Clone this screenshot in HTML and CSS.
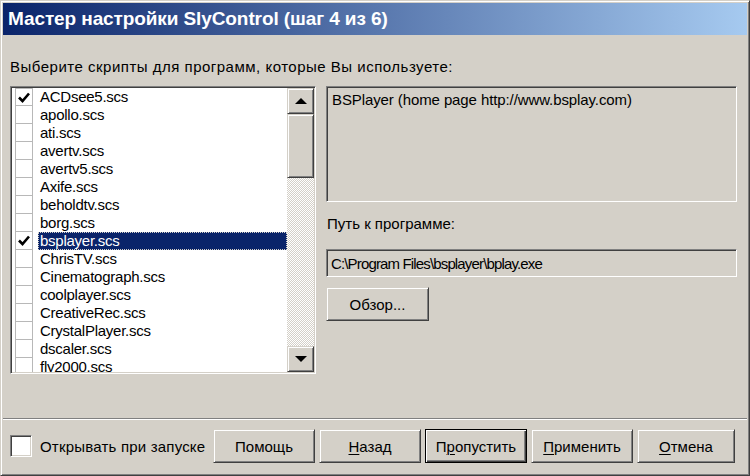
FILE: index.html
```html
<!DOCTYPE html>
<html lang="ru">
<head>
<meta charset="utf-8">
<title>Мастер настройки SlyControl</title>
<link rel="stylesheet" href="styles.css">
</head>
<body>
<div class="window">
  <div class="titlebar">Мастер настройки SlyControl (шаг 4 из 6)</div>
  <div class="content">
    <div class="prompt">Выберите скрипты для программ, которые Вы используете:</div>
    <div class="main">
      <div class="listbox">
        <ul class="items">
          <li class="item"><span class="cb"><svg viewBox="0 0 12 11" class="tick"><path d="M1 5.5 L4.5 9 L11 1.5"/></svg></span><span class="name">ACDsee5.scs</span></li>
          <li class="item"><span class="cb"></span><span class="name">apollo.scs</span></li>
          <li class="item"><span class="cb"></span><span class="name">ati.scs</span></li>
          <li class="item"><span class="cb"></span><span class="name">avertv.scs</span></li>
          <li class="item"><span class="cb"></span><span class="name">avertv5.scs</span></li>
          <li class="item"><span class="cb"></span><span class="name">Axife.scs</span></li>
          <li class="item"><span class="cb"></span><span class="name">beholdtv.scs</span></li>
          <li class="item"><span class="cb"></span><span class="name">borg.scs</span></li>
          <li class="item"><span class="cb"><svg viewBox="0 0 12 11" class="tick"><path d="M1 5.5 L4.5 9 L11 1.5"/></svg></span><span class="name selected">bsplayer.scs</span></li>
          <li class="item"><span class="cb"></span><span class="name">ChrisTV.scs</span></li>
          <li class="item"><span class="cb"></span><span class="name">Cinematograph.scs</span></li>
          <li class="item"><span class="cb"></span><span class="name">coolplayer.scs</span></li>
          <li class="item"><span class="cb"></span><span class="name">CreativeRec.scs</span></li>
          <li class="item"><span class="cb"></span><span class="name">CrystalPlayer.scs</span></li>
          <li class="item"><span class="cb"></span><span class="name">dscaler.scs</span></li>
          <li class="item"><span class="cb"></span><span class="name">fly2000.scs</span></li>
        </ul>
        <div class="scrollbar">
          <div class="sbtn"><span class="arrow up"></span></div>
          <div class="thumb"></div>
          <div class="track"></div>
          <div class="sbtn"><span class="arrow down"></span></div>
        </div>
      </div>
      <div class="side">
        <div class="field desc">BSPlayer (home page http://www.bsplay.com)</div>
        <div class="label">Путь к программе:</div>
        <div class="field path">C:\Program Files\bsplayer\bplay.exe</div>
        <button class="btn browse">Обзор...</button>
      </div>
    </div>
  </div>
  <div class="separator"></div>
  <div class="footer">
    <span class="bigcb"></span>
    <span class="cblabel">Открывать при запуске</span>
    <div class="buttons">
      <button class="btn">Помощь</button>
      <button class="btn"><u>Н</u>азад</button>
      <button class="btn default">П<u>р</u>опустить</button>
      <button class="btn"><u>П</u>рименить</button>
      <button class="btn"><u>О</u>тмена</button>
    </div>
  </div>
</div>
</body>
</html>
```

FILE: styles.css
```css
* { box-sizing: border-box; }
html, body { margin: 0; padding: 0; }
body {
  width: 750px;
  height: 476px;
  background: #d4d0c8;
  font-family: "Liberation Sans", Arial, sans-serif;
  font-size: 15px;
  color: #000;
  overflow: hidden;
}
.window {
  width: 750px;
  height: 476px;
  border: 1px solid;
  border-color: #d4d0c8 #404040 #404040 #d4d0c8;
  box-shadow: inset 1px 1px 0 #fff, inset -1px -1px 0 #808080;
  padding: 2px;
  display: flex;
  flex-direction: column;
}
.titlebar {
  height: 32px;
  background: linear-gradient(to right, #0a246a, #a6caf0);
  color: #fff;
  font-weight: bold;
  font-size: 19px;
  letter-spacing: -0.1px;
  line-height: 32px;
  padding-left: 5px;
  white-space: nowrap;
}
.content {
  padding: 24px 10px 0 7px;
}
.prompt {
  line-height: 16px;
  height: 16px;
  letter-spacing: 0.5px;
}
.main {
  display: flex;
  gap: 10px;
  margin-top: 11px;
  height: 288px;
}
.listbox {
  width: 306px;
  height: 288px;
  display: flex;
  background: #fff;
  border: 1px solid;
  border-color: #808080 #fff #fff #808080;
  box-shadow: inset 1px 1px 0 #404040, inset -1px -1px 0 #d4d0c8;
  padding: 1px;
}
.items {
  list-style: none;
  margin: 0;
  padding: 0 0 0 3px;
  flex: 1;
  overflow: hidden;
}
.item {
  display: flex;
  height: 18px;
  align-items: stretch;
}
.cb {
  width: 18px;
  flex: none;
  border: 1px solid #b8b8b8;
  border-top: none;
  display: flex;
  align-items: center;
  justify-content: center;
}
.item:first-child .cb { border-top: 1px solid #b8b8b8; }
.tick {
  width: 12px;
  height: 11px;
}
.tick path {
  fill: none;
  stroke: #000;
  stroke-width: 2.6;
}
.name {
  flex: 1;
  margin-left: 5px;
  padding-left: 2px;
  line-height: 18px;
  white-space: nowrap;
  letter-spacing: -0.25px;
}
.name.selected {
  background: #0a246a;
  color: #fff;
  outline: 1px dotted #d4d0c8;
  outline-offset: -1px;
}
.scrollbar {
  width: 27px;
  flex: none;
  display: flex;
  flex-direction: column;
}
.sbtn, .thumb, .btn {
  background: #d4d0c8;
  border: 1px solid;
  border-color: #d4d0c8 #404040 #404040 #d4d0c8;
  box-shadow: inset 1px 1px 0 #fff, inset -1px -1px 0 #808080;
}
.sbtn {
  height: 26px;
  display: flex;
  align-items: center;
  justify-content: center;
}
.thumb { height: 64px; }
.track {
  flex: 1;
  background: repeating-conic-gradient(#fff 0 25%, #d4d0c8 0 50%) 0 0 / 2px 2px;
}
.arrow {
  width: 0;
  height: 0;
  border-left: 6px solid transparent;
  border-right: 6px solid transparent;
}
.arrow.up { border-bottom: 6px solid #000; }
.arrow.down { border-top: 6px solid #000; }
.side {
  flex: 1;
  display: flex;
  flex-direction: column;
  align-items: flex-start;
}
.field {
  width: 100%;
  background: #d4d0c8;
  border: 1px solid;
  border-color: #808080 #fff #fff #808080;
  box-shadow: inset 1px 1px 0 #404040, inset -1px -1px 0 #d4d0c8;
  padding: 4px 5px;
  line-height: 18px;
  white-space: nowrap;
}
.desc { height: 116px; letter-spacing: -0.1px; }
.label {
  margin-top: 14px;
  line-height: 16px;
  height: 16px;
  padding-left: 1px;
}
.path {
  margin-top: 17px;
  height: 28px;
  padding-top: 5px;
  padding-left: 4px;
  letter-spacing: -0.85px;
}
.btn {
  font-family: inherit;
  font-size: 15px;
  color: #000;
  height: 34px;
  padding: 0;
  text-align: center;
}
.browse {
  width: 103px;
  margin-top: 10px;
}
.separator {
  margin-top: 44px;
  height: 2px;
  border-top: 1px solid #808080;
  border-bottom: 1px solid #fff;
}
.footer {
  display: flex;
  align-items: center;
  padding: 9px 12px 0 7px;
}
.bigcb {
  width: 22px;
  height: 22px;
  background: #fff;
  border: 1px solid;
  border-color: #808080 #fff #fff #808080;
  box-shadow: inset 1px 1px 0 #404040, inset -1px -1px 0 #d4d0c8;
}
.cblabel {
  margin-left: 8px;
  letter-spacing: 0.2px;
}
.buttons {
  margin-left: auto;
  display: grid;
  grid-template-columns: 102px 102px 102px 102px 98px;
  gap: 4px;
}
.btn.default {
  border-color: #000;
  box-shadow: inset 1px 1px 0 #fff, inset -1px -1px 0 #404040, inset -2px -2px 0 #808080;
}
u { text-decoration-thickness: 1px; text-underline-offset: 2px; }
```
